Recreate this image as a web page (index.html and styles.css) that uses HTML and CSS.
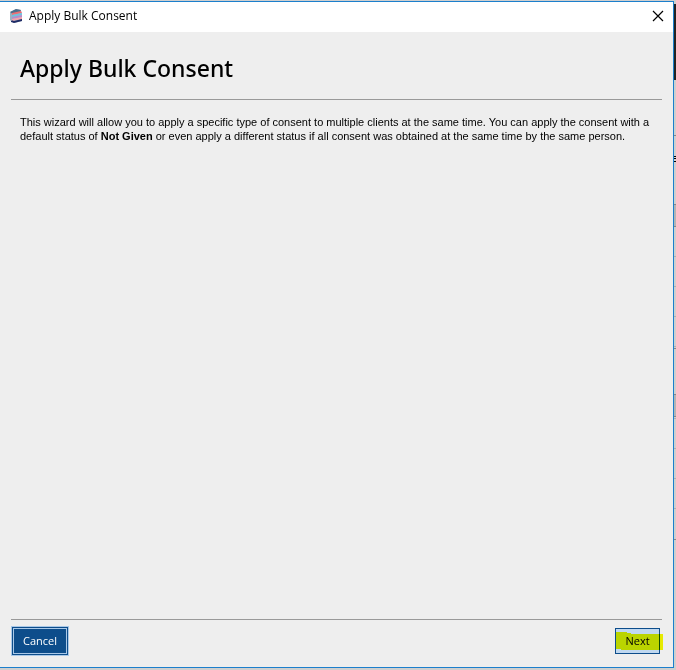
FILE: index.html
```html
<!DOCTYPE html>
<html lang="en">
<head>
<meta charset="UTF-8">
<meta name="viewport" content="width=device-width, initial-scale=1.0">
<title>Apply Bulk Consent</title>
<link rel="stylesheet" href="styles.css">
</head>
<body>

<main class="window">
  <header class="titlebar">
    <svg class="app-icon" viewBox="0 0 14 16" aria-hidden="true">
      <polygon points="1,4 7,1 12,2 13,13 5,15 1,12" fill="#a9b4c6"/>
      <polygon points="1,4 7,1 12,2 11,4 3,6" fill="#4d6f8c"/>
      <polygon points="3,5 12,3 13,5 3,7" fill="#ee6f74"/>
      <polygon points="3,7 13,5 13,7 3,9" fill="#6cc3e0"/>
      <polygon points="3,9 13,7 13,9 3,11" fill="#b58ccb"/>
      <polygon points="3,11 13,9 13,11 3,13" fill="#f3a3ac"/>
      <polygon points="2,12 5,13 13,11 13,13 5,15 2,14" fill="#1f2c66"/>
      <polygon points="1,4 3,6 3,13 1,12" fill="#9fb0c0"/>
    </svg>
    <span class="caption">Apply Bulk Consent</span>
    <button class="close" type="button" aria-label="Close">
      <svg viewBox="0 0 10 10"><path d="M0 0L10 10M10 0L0 10"/></svg>
    </button>
  </header>

  <div class="content">
    <h1>Apply Bulk Consent</h1>
    <p class="intro">This wizard will allow you to apply a specific type of consent to multiple clients at the same time. You can apply the consent with a default status of <b>Not Given</b> or even apply a different status if all consent was obtained at the same time by the same person.</p>
  </div>

  <footer class="actions">
    <button class="btn cancel" type="button">Cancel</button>
    <button class="btn next" type="button">Next
      <svg class="marker" viewBox="0 0 48 18" aria-hidden="true"><path d="M0 0H11V1H15V2H47V18H5V17H0Z"/></svg>
    </button>
  </footer>
</main>

<!-- edge of the screen behind the dialog -->
<div class="behind"></div>

</body>
</html>
```
FILE: styles.css
```css
*{box-sizing:border-box;margin:0;padding:0}
html,body{height:100%}
body{
  display:flex;padding:1px 0 2px;
  background:#cfcfcf;color:#000;
  font-family:"Noto Sans","Open Sans",sans-serif;
}

/* dialog */
.window{
  flex:1;display:flex;flex-direction:column;
  background:#eee;
  border:1px solid #1b7fcc;border-left:0;
}

.titlebar{
  display:flex;align-items:center;gap:6px;
  height:30px;padding:0 10px 2px 9px;
  background:#fff;
}
.app-icon{width:14px;height:16px}
.caption{flex:1;font-family:"Open Sans",sans-serif;font-size:12px;line-height:16px}
.close{display:flex;border:0;background:none}
.close svg{width:10px;height:10px;overflow:visible}
.close path{fill:none;stroke:#000;stroke-width:1.2}

.content{flex:1;padding:0 11px}
h1{
  padding:19px 9px 14px;
  border-bottom:1px solid #999;
  font-size:23px;font-weight:500;line-height:34px;
}
.intro{
  padding:15px 9px;
  font-family:"Liberation Sans",Arial,sans-serif;
  font-size:11px;line-height:14px;
}

/* buttons */
.actions{
  display:flex;justify-content:space-between;align-items:center;
  margin:0 11px;padding:6px 2px 11px 0;
  border-top:1px solid #999;
}
.btn{font-family:"Open Sans",sans-serif;font-size:11px;line-height:16px}
.cancel{
  width:58px;height:30px;
  background:#0d4d8b;color:#fff;
  border:1px solid #a9c8e8;
  outline:1px solid #a9c8e8;outline-offset:-3px;
}
.next{
  position:relative;
  width:45px;height:26px;
  background:#c0d8f0;color:#000;
  border:1px solid #0d4d8b;
}
.marker{
  position:absolute;left:0;top:3px;
  width:48px;height:18px;
  mix-blend-mode:multiply;pointer-events:none;
}
.marker path{fill:#f7fb00}

/* two pixel sliver of the page underneath */
.behind{
  width:2px;
  background:
    linear-gradient(#222,#222) 0 3px/2px 76px,
    linear-gradient(#888,#888) 0 134px/2px 1px,
    linear-gradient(#000,#000) 0 155px/2px 1px,
    linear-gradient(#000,#000) 0 157px/2px 1px,
    linear-gradient(#000,#000) 0 160px/2px 1px,
    linear-gradient(#888,#888) 0 203px/2px 1px,
    linear-gradient(#888,#888) 0 225px/2px 1px,
    linear-gradient(#b5b5b5,#b5b5b5) 0 204px/2px 21px,
    linear-gradient(#b0b0b0,#b0b0b0) 0 255px/2px 1px,
    linear-gradient(#b0b0b0,#b0b0b0) 0 285px/2px 1px,
    linear-gradient(#b0b0b0,#b0b0b0) 0 315px/2px 1px,
    linear-gradient(#b0b0b0,#b0b0b0) 0 345px/2px 1px,
    linear-gradient(#888,#888) 0 347px/2px 1px,
    linear-gradient(#888,#888) 0 393px/2px 1px,
    linear-gradient(#b5b5b5,#b5b5b5) 0 394px/2px 21px,
    linear-gradient(#888,#888) 0 415px/2px 1px,
    linear-gradient(#b0b0b0,#b0b0b0) 0 417px/2px 1px,
    linear-gradient(#b0b0b0,#b0b0b0) 0 447px/2px 1px,
    linear-gradient(#b0b0b0,#b0b0b0) 0 477px/2px 1px,
    linear-gradient(#b0b0b0,#b0b0b0) 0 507px/2px 1px,
    linear-gradient(#888,#888) 0 538px/2px 1px,
    #cfcfcf;
  background-repeat:no-repeat;
}
```
